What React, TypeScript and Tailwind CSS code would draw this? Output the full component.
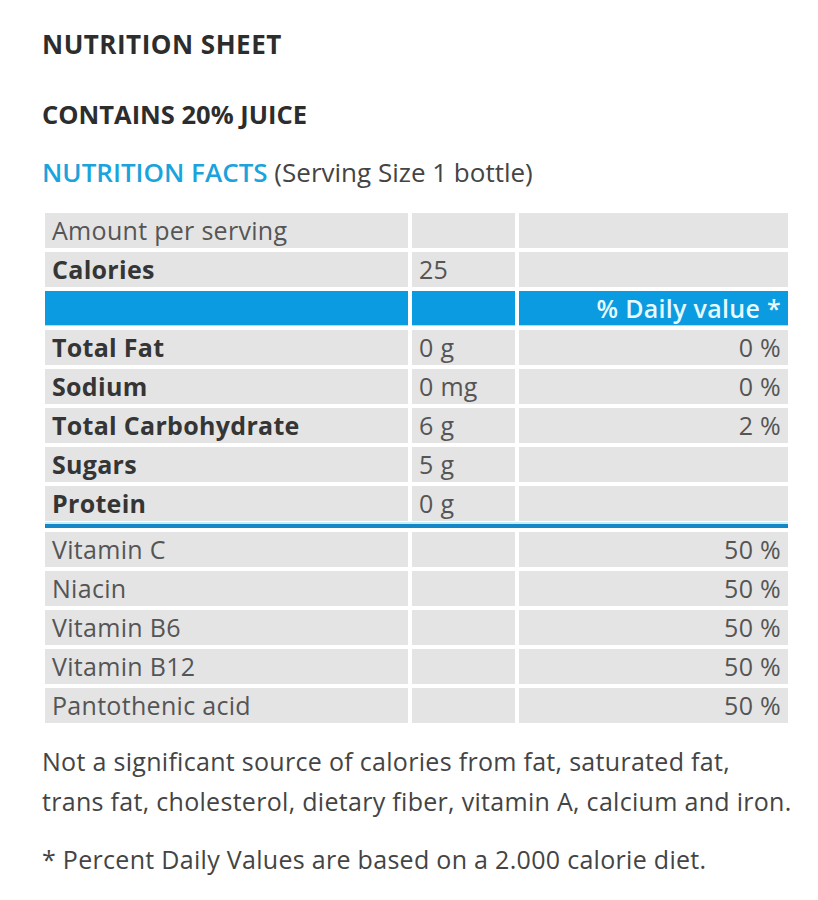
import React from "react";

const nutrients: [string, string, string][] = [
  ["Total Fat", "0 g", "0 %"],
  ["Sodium", "0 mg", "0 %"],
  ["Total Carbohydrate", "6 g", "2 %"],
  ["Sugars", "5 g", ""],
  ["Protein", "0 g", ""],
];

const vitamins: [string, string][] = [
  ["Vitamin C", "50 %"],
  ["Niacin", "50 %"],
  ["Vitamin B6", "50 %"],
  ["Vitamin B12", "50 %"],
  ["Pantothenic acid", "50 %"],
];

function Row({
  a,
  b,
  c,
  boldA,
  textA = "text-[#353535]",
}: {
  a: string;
  b: string;
  c: string;
  boldA?: boolean;
  textA?: string;
}) {
  return (
    <div className="grid grid-cols-[363px_103px_269px] gap-x-[4px] h-[35px] text-[25px] leading-[35px] tracking-[0.3px]">
      <div className={`bg-[#e4e4e4] pl-[7px] ${textA} ${boldA ? "font-bold" : ""}`}>{a}</div>
      <div className="bg-[#e4e4e4] pl-[7px] text-[#555555]">{b}</div>
      <div className="bg-[#e4e4e4] pr-[7px] text-right text-[#555555]">{c}</div>
    </div>
  );
}

export default function App() {
  return (
    <div
      className="w-[818px] h-[900px] bg-white pl-[42px] pt-[26px]"
      style={{ fontFamily: '"Open Sans", "Liberation Sans", sans-serif' }}
    >
      <h1 className="text-[26px] leading-[36px] font-bold tracking-[0.5px] text-[#2d2d2d]">NUTRITION SHEET</h1>
      <h2 className="mt-[34px] text-[25.5px] leading-[36px] font-bold text-[#2d2d2d]">CONTAINS 20% JUICE</h2>
      <p className="mt-[22px] text-[26px] leading-[36px] text-[#444444]">
        <span className="font-semibold text-[#1aa3dc]">NUTRITION FACTS</span> (Serving Size 1 bottle)
      </p>
      <div className="mt-[23px] ml-[3px] flex flex-col gap-[4px]">
        <Row a="Amount per serving" b="" c="" textA="text-[#555555]" />
        <Row a="Calories" b="25" c="" boldA />
        <div className="grid grid-cols-[363px_103px_269px] gap-x-[4px] h-[35px] text-[25px] leading-[34px] tracking-[0.3px]">
          <div className="bg-[#0b9be0] border-b border-[#9fe3f7]" />
          <div className="bg-[#0b9be0] border-b border-[#9fe3f7]" />
          <div className="bg-[#0b9be0] border-b border-[#9fe3f7] pr-[7px] text-right text-[#e6faff] font-semibold">
            % Daily value *
          </div>
        </div>
        {nutrients.map(([a, b, c]) => (
          <Row key={a} a={a} b={b} c={c} boldA />
        ))}
        <div className="-mt-[3px] w-[743px] h-[6px] border-t-[2px] border-[#c5f0fb] bg-[#1687c6]" />
        {vitamins.map(([a, c]) => (
          <Row key={a} a={a} b="" c={c} textA="text-[#555555]" />
        ))}
      </div>
      <p className="mt-[18px] w-[751px] text-[25px] leading-[40px] tracking-[0.3px] text-[#444444]">
        Not a significant source of calories from fat, saturated fat, trans fat, cholesterol, dietary fiber, vitamin A, calcium and iron.
      </p>
      <p className="mt-[18px] text-[25px] leading-[40px] tracking-[0.3px] text-[#444444]">
        * Percent Daily Values are based on a 2.000 calorie diet.
      </p>
    </div>
  );
}
